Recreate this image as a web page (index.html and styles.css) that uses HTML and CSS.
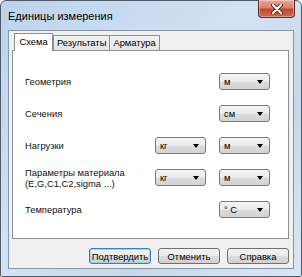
FILE: index.html
```html
<!DOCTYPE html>
<html lang="ru">

<head>
  <meta charset="UTF-8">
  <meta name="viewport" content="width=device-width, initial-scale=1.0">
  <title>Единицы измерения</title>
  <link rel="stylesheet" href="styles.css">
</head>

<body>
  <div class="window">
    <div class="titlebar">
      <span class="title">Единицы измерения</span>
      <button class="close-button" title="Закрыть">
        <svg width="14" height="10" viewBox="0 0 14 10">
          <path d="M3 1 L11 9 M11 1 L3 9" stroke="#5a2218" stroke-width="4" stroke-linecap="round" />
          <path d="M3 1 L11 9 M11 1 L3 9" stroke="#ffffff" stroke-width="2.2" stroke-linecap="round" />
        </svg>
      </button>
    </div>

    <div class="client">
      <div class="tabs">
        <div class="tab tab-active">Схема</div>
        <div class="tab">Результаты</div>
        <div class="tab">Арматура</div>
      </div>

      <div class="panel">
        <div class="form-grid">
          <span class="label">Геометрия</span>
          <div class="select col-last">м</div>

          <span class="label">Сечения</span>
          <div class="select col-last">см</div>

          <span class="label">Нагрузки</span>
          <div class="select">кг</div>
          <div class="select">м</div>

          <span class="label">Параметры материала<br>(E,G,C1,C2,sigma ...)</span>
          <div class="select">кг</div>
          <div class="select">м</div>

          <span class="label">Температура</span>
          <div class="select col-last">&deg; C</div>
        </div>
      </div>

      <div class="actions">
        <button class="dialog-button default-button">Подтвердить</button>
        <button class="dialog-button">Отменить</button>
        <button class="dialog-button">Справка</button>
      </div>
    </div>
  </div>
</body>

</html>
```

FILE: styles.css
```css
body {
  margin: 0;
  font-family: 'Liberation Sans', Arial, sans-serif;
  font-size: 9.4px;
  color: #000;
  background-color: #ffffff;
}

.window {
  width: 302px;
  height: 277px;
  box-sizing: border-box;
  border: 1px solid #4d5b6b;
  border-radius: 6px 6px 2px 2px;
  background: linear-gradient(135deg, #bcd2ec 0%, #d3e2f3 45%, #c6d8ee 70%, #d9e6f4 100%);
  padding: 0 7px 7px 7px;
  display: flex;
  flex-direction: column;
}

.titlebar {
  height: 29px;
  display: flex;
  align-items: center;
  position: relative;
}

.title {
  font-size: 11px;
  color: #000;
  margin-top: 1px;
}

/* close button hangs from the top edge */
.close-button {
  position: absolute;
  top: -1px;
  right: -1px;
  width: 37px;
  height: 18px;
  padding: 0;
  border: 1px solid #5b2a22;
  border-top: none;
  border-radius: 0 0 4px 4px;
  background: linear-gradient(#e8a898 0%, #d9806c 45%, #c24a32 55%, #cf6a4e 100%);
  box-shadow: inset 0 0 0 1px rgba(255, 255, 255, 0.35);
  display: flex;
  align-items: center;
  justify-content: center;
}

.client {
  flex: 1;
  background-color: #f0f0f0;
  border: 1px solid #8797aa;
  padding: 1px 4px 0 3px;
  display: flex;
  flex-direction: column;
}

.tabs {
  display: flex;
  align-items: flex-end;
  height: 18px;
  padding-left: 2px;
  position: relative;
  z-index: 1;
}

.tab {
  height: 14px;
  line-height: 14px;
  padding: 0 3px;
  border: 1px solid #8e8f8f;
  border-bottom: none;
  background: linear-gradient(#f2f2f2, #e3e3e3);
  margin-left: -1px;
  color: #000;
}

.tab-active {
  height: 17px;
  line-height: 16px;
  width: 29px;
  padding: 0 4px;
  background: #ffffff;
  margin-left: 0;
  margin-right: 1px;
  margin-bottom: -1px;
  text-align: center;
}

.panel {
  height: 189px;
  box-sizing: border-box;
  background: #ffffff;
  border: 1px solid #8e8f8f;
  padding: 22px 18px 0 12px;
}

.form-grid {
  display: grid;
  grid-template-columns: 1fr 51px 51px;
  grid-auto-rows: 17px;
  column-gap: 13px;
  row-gap: 15px;
}

.label {
  grid-column: 1;
  align-self: center;
  line-height: 11px;
  color: #111;
}

.select {
  box-sizing: border-box;
  height: 17px;
  line-height: 15px;
  padding-left: 4px;
  border: 1px solid #7a7a7a;
  border-radius: 3px;
  background: linear-gradient(#f4f4f4 0%, #eaeaea 50%, #dcdcdc 51%, #d2d2d2 100%);
  position: relative;
}

.select::after {
  content: "";
  position: absolute;
  right: 6px;
  top: 6px;
  border-left: 3.5px solid transparent;
  border-right: 3.5px solid transparent;
  border-top: 4px solid #000;
}

.col-last {
  grid-column: 3;
}

.actions {
  display: flex;
  justify-content: flex-end;
  gap: 7px;
  margin-top: 9px;
}

.dialog-button {
  width: 62px;
  height: 16px;
  padding: 0;
  font-family: 'Liberation Sans', Arial, sans-serif;
  font-size: 9.4px;
  color: #000;
  border: 1px solid #707070;
  border-radius: 3px;
  background: linear-gradient(#f2f2f2 0%, #ebebeb 50%, #dddddd 51%, #cfcfcf 100%);
}

.default-button {
  border-color: #3c7fb1;
  box-shadow: inset 0 0 0 1px #9fd2ef;
}
```
